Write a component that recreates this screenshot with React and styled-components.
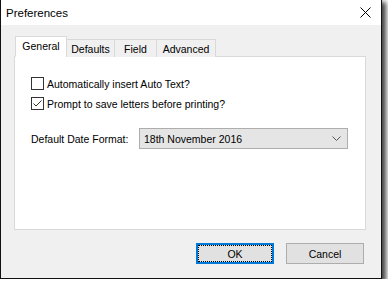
import React from "react";
import styled, { createGlobalStyle } from "styled-components";

const GlobalStyle = createGlobalStyle`
  body {
    margin: 0;
    background: #ffffff;
    font-family: "Liberation Sans", Arial, sans-serif;
  }
`;

const Window = styled.div`
  box-sizing: border-box;
  width: 382px;
  height: 279px;
  display: flex;
  flex-direction: column;
  background: #f0f0f0;
  border: 1px solid #111111;
  border-top: none;
  box-shadow: 3px 3px 5px 1px rgba(0, 0, 0, 0.75);
`;

const TitleBar = styled.div`
  height: 25px;
  display: flex;
  align-items: center;
  justify-content: space-between;
  padding: 0 10px 0 5px;
  background: #ffffff;
`;

const Title = styled.span`
  font-size: 11.5px;
  color: #000000;
`;

const CloseIcon = styled.svg`
  display: block;
  width: 11px;
  height: 11px;
`;

const Body = styled.div`
  flex: 1;
  display: flex;
  flex-direction: column;
  padding: 11px 0 0 13px;
`;

const TabStrip = styled.div`
  display: flex;
  align-items: flex-end;
  height: 21px;
  margin-left: 1px;
  margin-bottom: -1px;
  position: relative;
  z-index: 1;
`;

const Tab = styled.div`
  box-sizing: border-box;
  width: ${(p) => p.$w}px;
  height: ${(p) => (p.$active ? 21 : 18)}px;
  display: flex;
  align-items: center;
  justify-content: center;
  font-size: 10.5px;
  color: #000000;
  background: ${(p) => (p.$active ? "#ffffff" : "#f0f0f0")};
  border: 1px solid #d9d9d9;
  border-bottom: ${(p) => (p.$active ? "1px solid #ffffff" : "none")};
  margin-left: ${(p) => (p.$first ? 0 : -1)}px;
  padding-bottom: ${(p) => (p.$active ? 1 : 0)}px;
`;

const Panel = styled.div`
  box-sizing: border-box;
  width: 352px;
  height: 174px;
  display: flex;
  flex-direction: column;
  background: #ffffff;
  border: 1px solid #d9d9d9;
  padding: 20px 0 0 16px;
`;

const CheckRow = styled.label`
  display: flex;
  align-items: center;
  gap: 3px;
  height: 13px;
  margin-bottom: 7px;
  font-size: 10.5px;
  color: #000000;
`;

const Box = styled.span`
  box-sizing: border-box;
  width: 13px;
  height: 13px;
  border: 1px solid #333333;
  background: #ffffff;
  display: flex;
  align-items: center;
  justify-content: center;
`;

const FieldRow = styled.div`
  display: flex;
  align-items: center;
  margin-top: 11px;
`;

const Label = styled.span`
  width: 108px;
  font-size: 10.5px;
  color: #000000;
`;

const Select = styled.div`
  box-sizing: border-box;
  width: 209px;
  height: 21px;
  display: flex;
  align-items: center;
  justify-content: space-between;
  padding: 0 6px 0 4px;
  background: #e5e5e5;
  border: 1px solid #adadad;
  font-size: 10.5px;
  color: #000000;
`;

const ButtonRow = styled.div`
  display: flex;
  justify-content: flex-end;
  gap: 12px;
  width: 350px;
  margin-top: 13px;
`;

const Button = styled.div`
  box-sizing: border-box;
  width: 78px;
  height: 21px;
  display: flex;
  align-items: center;
  justify-content: center;
  background: #e1e1e1;
  border: ${(p) => (p.$default ? "2px solid #0078d7" : "1px solid #adadad")};
  font-size: 10.5px;
  color: #000000;
`;

const FocusRing = styled.span`
  box-sizing: border-box;
  width: 100%;
  height: 100%;
  display: flex;
  align-items: center;
  justify-content: center;
  border: 1px dotted #000000;
`;

function Checkbox({ checked, children }) {
  return (
    <CheckRow>
      <Box>
        {checked && (
          <svg width="11" height="11" viewBox="0 0 11 11">
            <path d="M1.5 5.5 L4 8 L9.5 2.5" fill="none" stroke="#333" strokeWidth="1" />
          </svg>
        )}
      </Box>
      {children}
    </CheckRow>
  );
}

export default function App() {
  return (
    <>
      <GlobalStyle />
      <Window>
        <TitleBar>
          <Title>Preferences</Title>
          <CloseIcon viewBox="0 0 11 11">
            <path d="M0.5 0.5 L10.5 10.5 M10.5 0.5 L0.5 10.5" stroke="#000" strokeWidth="1" />
          </CloseIcon>
        </TitleBar>
        <Body>
          <TabStrip>
            <Tab $w={52} $active $first>General</Tab>
            <Tab $w={49}>Defaults</Tab>
            <Tab $w={43}>Field</Tab>
            <Tab $w={60}>Advanced</Tab>
          </TabStrip>
          <Panel>
            <Checkbox>Automatically insert Auto Text?</Checkbox>
            <Checkbox checked>Prompt to save letters before printing?</Checkbox>
            <FieldRow>
              <Label>Default Date Format:</Label>
              <Select>
                <span>18th November 2016</span>
                <svg width="9" height="5" viewBox="0 0 9 5">
                  <path d="M0.5 0.5 L4.5 4.5 L8.5 0.5" fill="none" stroke="#555" strokeWidth="1" />
                </svg>
              </Select>
            </FieldRow>
          </Panel>
          <ButtonRow>
            <Button $default>
              <FocusRing>OK</FocusRing>
            </Button>
            <Button>Cancel</Button>
          </ButtonRow>
        </Body>
      </Window>
    </>
  );
}
